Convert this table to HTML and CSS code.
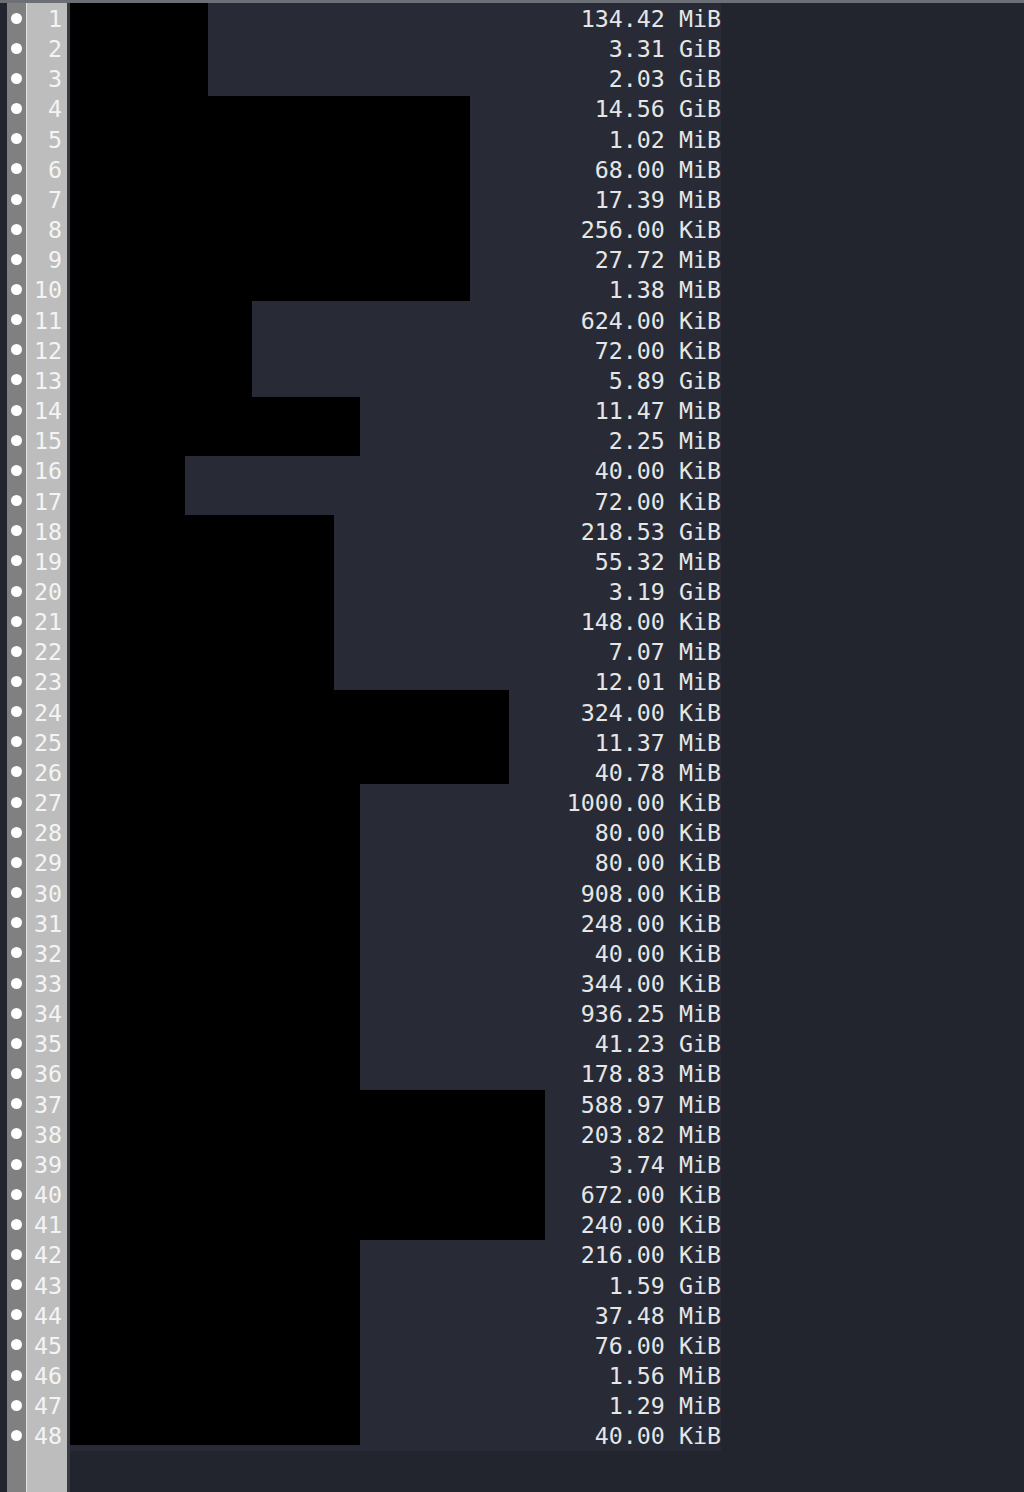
FILE: index.html
```html
<!DOCTYPE html>
<html lang="en">
<head>
    <meta charset="UTF-8">
    <meta name="viewport" content="width=device-width, initial-scale=1.0">
    <title>du - sizes</title>
    <link rel="stylesheet" href="styles.css">
</head>
<body>
    <div class="editor">
        <div class="lines">
            <div class="row"><span class="mark"><i></i></span><span class="num">1</span><span class="size">134.42 MiB</span></div>
            <div class="row"><span class="mark"><i></i></span><span class="num">2</span><span class="size">3.31 GiB</span></div>
            <div class="row"><span class="mark"><i></i></span><span class="num">3</span><span class="size">2.03 GiB</span></div>
            <div class="row"><span class="mark"><i></i></span><span class="num">4</span><span class="size">14.56 GiB</span></div>
            <div class="row"><span class="mark"><i></i></span><span class="num">5</span><span class="size">1.02 MiB</span></div>
            <div class="row"><span class="mark"><i></i></span><span class="num">6</span><span class="size">68.00 MiB</span></div>
            <div class="row"><span class="mark"><i></i></span><span class="num">7</span><span class="size">17.39 MiB</span></div>
            <div class="row"><span class="mark"><i></i></span><span class="num">8</span><span class="size">256.00 KiB</span></div>
            <div class="row"><span class="mark"><i></i></span><span class="num">9</span><span class="size">27.72 MiB</span></div>
            <div class="row"><span class="mark"><i></i></span><span class="num">10</span><span class="size">1.38 MiB</span></div>
            <div class="row"><span class="mark"><i></i></span><span class="num">11</span><span class="size">624.00 KiB</span></div>
            <div class="row"><span class="mark"><i></i></span><span class="num">12</span><span class="size">72.00 KiB</span></div>
            <div class="row"><span class="mark"><i></i></span><span class="num">13</span><span class="size">5.89 GiB</span></div>
            <div class="row"><span class="mark"><i></i></span><span class="num">14</span><span class="size">11.47 MiB</span></div>
            <div class="row"><span class="mark"><i></i></span><span class="num">15</span><span class="size">2.25 MiB</span></div>
            <div class="row"><span class="mark"><i></i></span><span class="num">16</span><span class="size">40.00 KiB</span></div>
            <div class="row"><span class="mark"><i></i></span><span class="num">17</span><span class="size">72.00 KiB</span></div>
            <div class="row"><span class="mark"><i></i></span><span class="num">18</span><span class="size">218.53 GiB</span></div>
            <div class="row"><span class="mark"><i></i></span><span class="num">19</span><span class="size">55.32 MiB</span></div>
            <div class="row"><span class="mark"><i></i></span><span class="num">20</span><span class="size">3.19 GiB</span></div>
            <div class="row"><span class="mark"><i></i></span><span class="num">21</span><span class="size">148.00 KiB</span></div>
            <div class="row"><span class="mark"><i></i></span><span class="num">22</span><span class="size">7.07 MiB</span></div>
            <div class="row"><span class="mark"><i></i></span><span class="num">23</span><span class="size">12.01 MiB</span></div>
            <div class="row"><span class="mark"><i></i></span><span class="num">24</span><span class="size">324.00 KiB</span></div>
            <div class="row"><span class="mark"><i></i></span><span class="num">25</span><span class="size">11.37 MiB</span></div>
            <div class="row"><span class="mark"><i></i></span><span class="num">26</span><span class="size">40.78 MiB</span></div>
            <div class="row"><span class="mark"><i></i></span><span class="num">27</span><span class="size">1000.00 KiB</span></div>
            <div class="row"><span class="mark"><i></i></span><span class="num">28</span><span class="size">80.00 KiB</span></div>
            <div class="row"><span class="mark"><i></i></span><span class="num">29</span><span class="size">80.00 KiB</span></div>
            <div class="row"><span class="mark"><i></i></span><span class="num">30</span><span class="size">908.00 KiB</span></div>
            <div class="row"><span class="mark"><i></i></span><span class="num">31</span><span class="size">248.00 KiB</span></div>
            <div class="row"><span class="mark"><i></i></span><span class="num">32</span><span class="size">40.00 KiB</span></div>
            <div class="row"><span class="mark"><i></i></span><span class="num">33</span><span class="size">344.00 KiB</span></div>
            <div class="row"><span class="mark"><i></i></span><span class="num">34</span><span class="size">936.25 MiB</span></div>
            <div class="row"><span class="mark"><i></i></span><span class="num">35</span><span class="size">41.23 GiB</span></div>
            <div class="row"><span class="mark"><i></i></span><span class="num">36</span><span class="size">178.83 MiB</span></div>
            <div class="row"><span class="mark"><i></i></span><span class="num">37</span><span class="size">588.97 MiB</span></div>
            <div class="row"><span class="mark"><i></i></span><span class="num">38</span><span class="size">203.82 MiB</span></div>
            <div class="row"><span class="mark"><i></i></span><span class="num">39</span><span class="size">3.74 MiB</span></div>
            <div class="row"><span class="mark"><i></i></span><span class="num">40</span><span class="size">672.00 KiB</span></div>
            <div class="row"><span class="mark"><i></i></span><span class="num">41</span><span class="size">240.00 KiB</span></div>
            <div class="row"><span class="mark"><i></i></span><span class="num">42</span><span class="size">216.00 KiB</span></div>
            <div class="row"><span class="mark"><i></i></span><span class="num">43</span><span class="size">1.59 GiB</span></div>
            <div class="row"><span class="mark"><i></i></span><span class="num">44</span><span class="size">37.48 MiB</span></div>
            <div class="row"><span class="mark"><i></i></span><span class="num">45</span><span class="size">76.00 KiB</span></div>
            <div class="row"><span class="mark"><i></i></span><span class="num">46</span><span class="size">1.56 MiB</span></div>
            <div class="row"><span class="mark"><i></i></span><span class="num">47</span><span class="size">1.29 MiB</span></div>
            <div class="row"><span class="mark"><i></i></span><span class="num">48</span><span class="size">40.00 KiB</span></div>

            <!-- redacted paths -->
            <div class="redact r1"></div>
            <div class="redact r2"></div>
            <div class="redact r3"></div>
            <div class="redact r4"></div>
            <div class="redact r5"></div>
            <div class="redact r6"></div>
            <div class="redact r7"></div>
            <div class="redact r8"></div>
            <div class="redact r9"></div>
            <div class="redact r10"></div>
        </div>
        <div class="row filler"><span class="mark"></span><span class="num"></span><span class="size"></span></div>
    </div>
</body>
</html>
```

FILE: styles.css
```css
body {
    margin: 0;
    background-color: #22252e;
    font-family: 'DejaVu Sans Mono', 'Liberation Mono', monospace;
    font-size: 23.3px;
    color: #e6e6e6;
}

.editor {
    display: flex;
    flex-direction: column;
    min-height: 100vh;
    box-sizing: border-box;
    border-top: 3px solid #6c6f76;
}

.lines {
    position: relative;
}

.row {
    display: flex;
    height: 30.17px;
    line-height: 32px;
}

.mark {
    width: 19px;
    margin-left: 7px;
    background: #808080;
    display: flex;
    align-items: center;
    justify-content: center;
}

.mark i {
    width: 11px;
    height: 11px;
    border-radius: 50%;
    background: #ffffff;
}

.num {
    width: 35px;
    padding-right: 5px;
    text-align: right;
    background: #bdbdbd;
    color: #f4f4f4;
    border-left: 1px solid #e2e2e2;
    border-right: 3px solid #383a42;
}

.size {
    width: 651px;
    text-align: right;
    white-space: pre;
    background: #282b36;
}

.filler {
    flex: 1;
    height: auto;
}

.filler .size {
    background: transparent;
}

.redact {
    position: absolute;
    left: 70px;
    background: #000;
}

.r1 { top: 0; width: 138px; height: 93px; }
.r2 { top: 93px; width: 400px; height: 205px; }
.r3 { top: 298px; width: 182px; height: 96px; }
.r4 { top: 394px; width: 290px; height: 59px; }
.r5 { top: 453px; width: 115px; height: 59px; }
.r6 { top: 512px; width: 264px; height: 175px; }
.r7 { top: 687px; width: 439px; height: 94px; }
.r8 { top: 781px; width: 290px; height: 306px; }
.r9 { top: 1087px; width: 475px; height: 150px; }
.r10 { top: 1237px; width: 290px; height: 205px; }
```
